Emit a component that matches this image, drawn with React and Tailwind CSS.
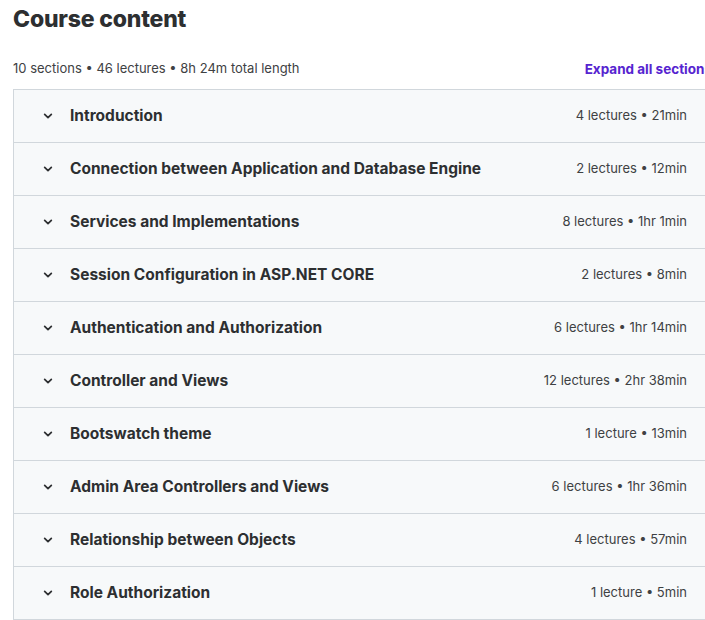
import React from "react";

const sections = [
  ["Introduction", "4 lectures • 21min"],
  ["Connection between Application and Database Engine", "2 lectures • 12min"],
  ["Services and Implementations", "8 lectures • 1hr 1min"],
  ["Session Configuration in ASP.NET CORE", "2 lectures • 8min"],
  ["Authentication and Authorization", "6 lectures • 1hr 14min"],
  ["Controller and Views", "12 lectures • 2hr 38min"],
  ["Bootswatch theme", "1 lecture • 13min"],
  ["Admin Area Controllers and Views", "6 lectures • 1hr 36min"],
  ["Relationship between Objects", "4 lectures • 57min"],
  ["Role Authorization", "1 lecture • 5min"],
];

function Chevron() {
  return (
    <svg width="16" height="16" viewBox="0 0 24 24" fill="none" className="shrink-0">
      <path d="M7 9.5l5 5 5-5" stroke="#2d2f31" strokeWidth="2.6" strokeLinecap="round" strokeLinejoin="round" />
    </svg>
  );
}

export default function App() {
  return (
    <div className="w-[705px] h-[620px] overflow-hidden bg-white text-[#2d2f31]" style={{ fontFamily: "Inter, 'Noto Sans', sans-serif" }}>
      <div className="w-[699px] ml-[13px]">
        <h2 className="text-[23px] font-extrabold leading-[38px] tracking-[-0.2px]">Course content</h2>
        {/* summary line */}
        <div className="flex items-center justify-between mt-[16px] h-[30px]">
          <span className="text-[13px] text-[#3e4143]">10 sections • 46 lectures • 8h 24m total length</span>
          <button className="text-[13.5px] font-bold text-[#5624d0]">Expand all sections</button>
        </div>

        {/* sections list */}
        <div className="mt-[5px] border border-[#d1d7dc] border-b-0">
          {sections.map(([title, meta]) => (
            <div key={title} className="flex items-center h-[53px] bg-[#f7f9fa] border-b border-[#d1d7dc] pl-[26px] pr-[24px]">
              <Chevron />
              <span className="ml-[14px] flex-1 text-[15.5px] font-bold">{title}</span>
              <span className="text-[13px] text-[#3e4143]">{meta}</span>
            </div>
          ))}
        </div>
      </div>
    </div>
  );
}
